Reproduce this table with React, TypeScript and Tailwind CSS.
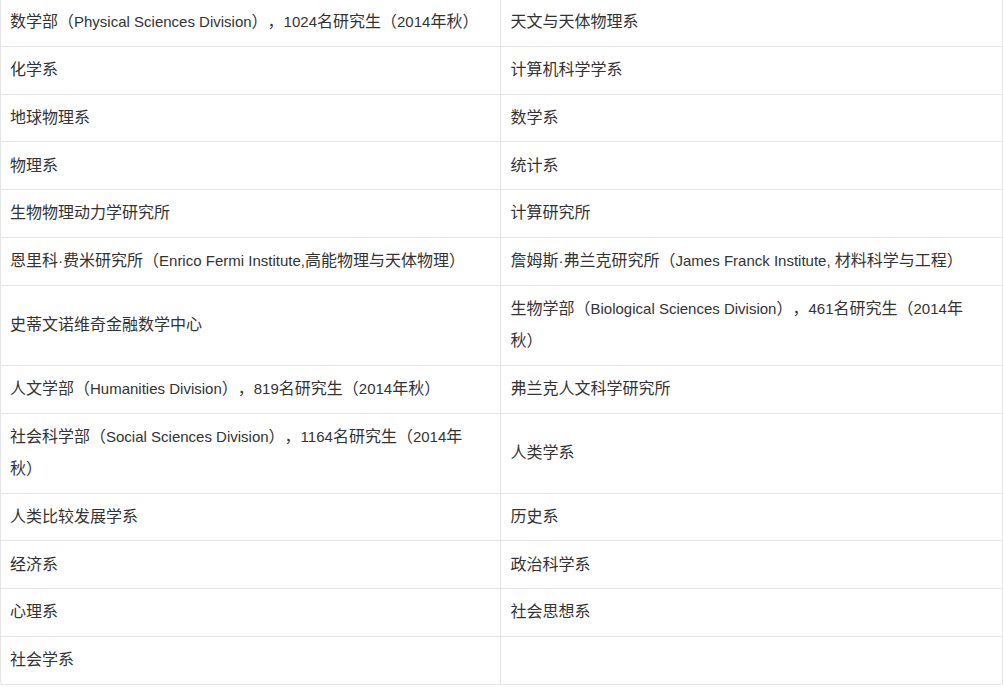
import React from 'react';

// '\n' marks where the long cells wrap in the original
const rows: [string, string][] = [
    ['数学部（Physical Sciences Division），1024名研究生（2014年秋）', '天文与天体物理系'],
    ['化学系', '计算机科学学系'],
    ['地球物理系', '数学系'],
    ['物理系', '统计系'],
    ['生物物理动力学研究所', '计算研究所'],
    ['恩里科·费米研究所（Enrico Fermi Institute,高能物理与天体物理）', '詹姆斯·弗兰克研究所（James Franck Institute, 材料科学与工程）'],
    ['史蒂文诺维奇金融数学中心', '生物学部（Biological Sciences Division），461名研究生（2014年\n秋）'],
    ['人文学部（Humanities Division），819名研究生（2014年秋）', '弗兰克人文科学研究所'],
    ['社会科学部（Social Sciences Division），1164名研究生（2014年\n秋）', '人类学系'],
    ['人类比较发展学系', '历史系'],
    ['经济系', '政治科学系'],
    ['心理系', '社会思想系'],
    ['社会学系', ''],
];

// CJK runs render a touch larger than the latin text in the original
const Cell: React.FC<{ text: string }> = ({ text }) => {
    const parts = text.split(/([\u3000-\u9fff\uff00-\uffef]+)/);
    return (
        <>
            {parts.map((p, i) =>
                /[\u3000-\u9fff\uff00-\uffef]/.test(p) ? (
                    <span key={i} className="text-[16px]">{p}</span>
                ) : (
                    <React.Fragment key={i}>{p}</React.Fragment>
                )
            )}
        </>
    );
};

const App: React.FC = () => {
    const font = { fontFamily: '"Liberation Sans", "Noto Sans CJK SC", sans-serif' };

    return (
        <div className="bg-white w-[1004px] min-h-[687px] overflow-hidden" style={font}>
            <div className="-mt-px w-[1003px] border border-t-0 border-[#e5e5e5] rounded-b-[3px] overflow-hidden">
                <table className="w-full table-fixed border-collapse text-[15px] leading-[32.2px] text-[#333] [text-spacing-trim:space-all] whitespace-pre-line">
                    <colgroup>
                        <col className="w-[499px]" />
                        <col />
                    </colgroup>
                    <tbody>
                        {rows.map(([a, b], i) => (
                            <tr key={i} className={i < rows.length - 1 ? 'border-b border-[#e5e5e5]' : ''}>
                                <td className="pl-[9px] pr-[10px] py-[7.3px] align-middle border-r border-[#e5e5e5]">
                                    <Cell text={a} />
                                </td>
                                <td className="px-[10px] py-[7.3px] align-middle">
                                    <Cell text={b} />
                                </td>
                            </tr>
                        ))}
                    </tbody>
                </table>
            </div>
        </div>
    );
};

export default App;
